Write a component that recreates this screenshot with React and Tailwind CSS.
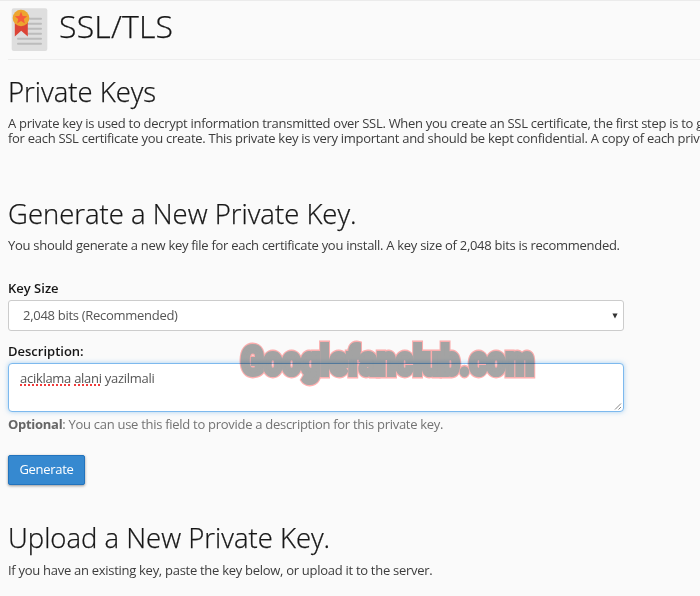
import React from 'react'

const textLines = [
  { y: 9.8, x: 15 }, { y: 14.8, x: 15 }, { y: 19.8, x: 14 }, { y: 24.8, x: 14 },
  { y: 29.8, x: 5 }, { y: 34.8, x: 5 },
]

function CertificateIcon() {
  return (
    <svg width="36" height="43" viewBox="0 0 36 43" className="overflow-visible">
      <rect x="-0.3" y="0.3" width="35.6" height="42.7" rx="2" fill="#dedede" />
      {textLines.map(({ y, x }) => (
        <rect key={y} x={x} y={y} width={30 - x} height="2" rx="1" fill="#bcbcbc" />
      ))}
      <path d="M2.8 14H15.8V28.4L9.2 22.8L2.8 28.4Z" fill="#dc4437" />
      <circle cx="9" cy="10" r="8.3" fill="#eda52f" />
      <path d="M9 3.6L10.7 7.9L15.2 8.2L11.8 11.1L12.9 15.6L9 13.1L5.1 15.6L6.2 11.1L2.8 8.2L7.3 7.9Z" fill="#f75a3c" />
    </svg>
  )
}

function Heading({ children }) {
  return (
    <h2 className="h-[38px] text-[27.5px] leading-[38px] font-light text-[#161616] tracking-normal [-webkit-text-stroke:0.25px_#161616]">
      {children}
    </h2>
  )
}

function Misspelled({ children }) {
  return (
    <span className="underline decoration-dotted decoration-[#f03b3b] decoration-2 underline-offset-1 [text-decoration-skip-ink:none]">
      {children}
    </span>
  )
}

function Watermark() {
  const shared = {
    x: 9,
    y: 39,
    textLength: 293,
    lengthAdjust: 'spacingAndGlyphs',
    fontSize: 41.5,
    fill: '#a6a6a6',
    strokeLinejoin: 'miter',
    strokeMiterlimit: 2,
  }
  return (
    <svg width="310" height="54" className="pointer-events-none absolute left-[232px] top-[335px] font-['Roboto'] font-black tracking-normal mix-blend-multiply">
      <text {...shared} stroke="#ffb0b0" strokeWidth="6.8">Googlefanclub.com</text>
      <text {...shared} stroke="#a6a6a6" strokeWidth="4.2" aria-hidden="true">Googlefanclub.com</text>
    </svg>
  )
}

export default function App() {
  return (
    <div className="relative w-[700px] h-[596px] overflow-hidden whitespace-nowrap border-t border-[#ebebeb] bg-[#fafafa] pl-2 font-['Open_Sans',sans-serif] text-[13px] leading-4 tracking-[-0.285px] text-[#3c3c3c]">
      {/* Page title */}
      <header className="flex h-[59px] border-b border-[#eeeeee] pl-1 pt-[7px]">
        <CertificateIcon />
        <h1 className="-mt-px ml-[11px] h-[38px] text-[32px] leading-[38px] font-light tracking-[0.2px] text-[#161616] [-webkit-text-stroke:0.25px_#161616]">SSL/TLS</h1>
      </header>

      {/* Private keys */}
      <section className="pt-[13px]">
        <Heading>Private Keys</Heading>
        <p className="mt-[5px] h-8 leading-[15px]">
          A private key is used to decrypt information transmitted over SSL. When you create an SSL certificate, the first step is to g
          <br />
          for each SSL certificate you create. This private key is very important and should be kept confidential. A copy of each priv
        </p>
      </section>

      {/* Generate */}
      <section className="pt-[47px]">
        <Heading>Generate a New Private Key.</Heading>
        <p className="mt-1">
          You should generate a new key file for each certificate you install. A key size of 2,048 bits is recommended.
        </p>

        <div className="mt-[27px] h-4 font-semibold tracking-normal text-[#161616]">Key Size</div>
        <div className="mt-1 flex h-[31px] w-[616px] items-center justify-between rounded-[3px] border border-[#cccccc] bg-white pl-3.5 pr-[5px] text-[#555555]">
          <span className="pb-0.5">2,048 bits (Recommended)</span>
          <svg width="6" height="6" viewBox="0 0 6 6">
            <path d="M0.4 0.5H5.6L3 5.5Z" fill="#333333" />
          </svg>
        </div>

        <div className="mt-3 h-4 font-semibold tracking-normal text-[#161616]">Description:</div>
        <div className="mt-1 flex h-[49px] w-[616px] items-end justify-between rounded-[4px] border border-[#7db9ee] bg-white pl-[11px] shadow-[0_0_5px_rgba(102,175,233,0.55)] text-[#555555]">
          <span className="self-start pt-1.5">
            <Misspelled>aciklama</Misspelled> <Misspelled>alani</Misspelled> yazilmali
          </span>
          <svg width="9" height="9" viewBox="0 0 9 9">
            <path d="M1 7.5L7 1.5M4.5 7.5L7 5" stroke="#888888" strokeWidth="1" fill="none" />
          </svg>
        </div>
        <p className="mt-1 text-[#737373]">
          <strong className="font-bold text-[#666666]">Optional</strong>: You can use this field to provide a description for this private key.
        </p>

        <button className="mt-[23px] block h-[30px] w-[77px] rounded-[2px] border border-[#2273bd] bg-[#3689d0] pb-0.5 tracking-[-0.3px] text-white shadow-[0_1px_3px_rgba(0,0,0,0.4)]">
          Generate
        </button>
      </section>

      {/* Upload */}
      <section className="pt-[34px]">
        <Heading>Upload a New Private Key.</Heading>
        <p className="mt-[5px]">If you have an existing key, paste the key below, or upload it to the server.</p>
      </section>

      <Watermark />
    </div>
  )
}
